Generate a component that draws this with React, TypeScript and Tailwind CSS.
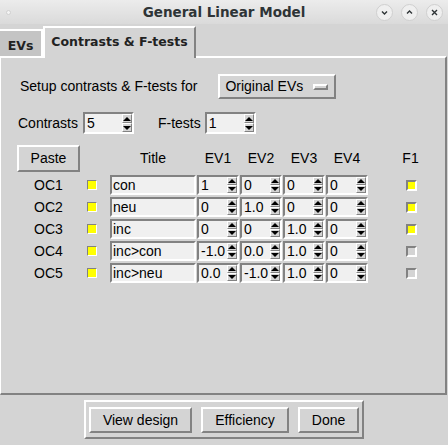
import React from "react";

const raised = "border-2 border-t-white border-l-white border-b-[#828282] border-r-[#828282]";
const sunken = "border-2 border-t-[#828282] border-l-[#828282] border-b-white border-r-white";

function Arrow({ up }: { up?: boolean }) {
  return (
    <div className="flex-1 flex items-center justify-center bg-[#d4d4d4] border border-t-white border-l-white border-b-[#828282] border-r-[#828282]">
      {up ? (
        <div className="w-0 h-0 border-l-[4px] border-r-[4px] border-b-[4px] border-l-transparent border-r-transparent border-b-black" />
      ) : (
        <div className="w-0 h-0 border-l-[4px] border-r-[4px] border-t-[4px] border-l-transparent border-r-transparent border-t-black" />
      )}
    </div>
  );
}

function Spin({ value, cls }: { value: string; cls: string }) {
  return (
    <div className={`flex ${cls} ${sunken} bg-[#f0f0f0]`}>
      <div className="flex-1 flex items-center pl-[2px] text-[14px] leading-none overflow-hidden whitespace-nowrap">{value}</div>
      <div className="flex flex-col w-[10px]">
        <Arrow up />
        <Arrow />
      </div>
    </div>
  );
}

function Check({ on }: { on: boolean }) {
  return (
    <div className={`w-[11px] h-[11px] ${sunken} ${on ? "bg-[#ffff00]" : "bg-[#d4d4d4]"}`} />
  );
}

const rows = [
  { oc: "OC1", title: "con", ev: ["1", "0", "0", "0"], f: true },
  { oc: "OC2", title: "neu", ev: ["0", "1.0", "0", "0"], f: true },
  { oc: "OC3", title: "inc", ev: ["0", "0", "1.0", "0"], f: true },
  { oc: "OC4", title: "inc>con", ev: ["-1.0", "0.0", "1.0", "0"], f: false },
  { oc: "OC5", title: "inc>neu", ev: ["0.0", "-1.0", "1.0", "0"], f: false },
];

function TitleCircle({ children }: { children: React.ReactNode }) {
  return (
    <div className="w-[17px] h-[17px] rounded-full border border-[#cfcfcf] bg-[#efefef] flex items-center justify-center">
      {children}
    </div>
  );
}

export default function App() {
  return (
    <div className="w-[448px] h-[445px] bg-[#d4d4d4] overflow-hidden flex flex-col font-['Liberation_Sans',Arial,sans-serif] text-black">
      {/* title bar */}
      <div className="h-[24px] flex items-center bg-linear-to-b from-[#ececec] to-[#dadada]">
        <div className="w-[80px] flex items-center pl-[6px]">
          <div className="w-[5px] h-[5px] rounded-full bg-[#f4f4f4] border border-[#d0d0d0]" />
        </div>
        <div className="flex-1 text-center font-['DejaVu_Sans',sans-serif] font-bold text-[13.5px] text-[#2e3436]">
          General Linear Model
        </div>
        <div className="w-[80px] flex items-center justify-end gap-[8px] pr-[5px]">
          <TitleCircle>
            <svg width="9" height="9" viewBox="0 0 9 9"><path d="M2 3.5 L4.5 6 L7 3.5" stroke="#2e3436" strokeWidth="1.4" fill="none" /></svg>
          </TitleCircle>
          <TitleCircle>
            <svg width="9" height="9" viewBox="0 0 9 9"><path d="M2 5.5 L4.5 3 L7 5.5" stroke="#2e3436" strokeWidth="1.4" fill="none" /></svg>
          </TitleCircle>
          <TitleCircle>
            <svg width="9" height="9" viewBox="0 0 9 9"><path d="M2 2 L7 7 M7 2 L2 7" stroke="#2e3436" strokeWidth="1.4" fill="none" /></svg>
          </TitleCircle>
        </div>
      </div>

      {/* tabs */}
      <div className="h-[32px] flex items-end font-['DejaVu_Sans',sans-serif] font-bold text-[12.5px] text-[#222]">
        <div className="w-[43px] h-[27px] bg-[#c4c4c4] border-t-2 border-r-2 border-t-white border-r-white flex items-center justify-center pt-[5px]">
          EVs
        </div>
        <div className="relative z-10 -mb-[2px] w-[153px] h-[32px] bg-[#d4d4d4] border-t-2 border-l-2 border-r-2 border-t-white border-l-white border-r-[#828282] flex items-start justify-center pt-[5px]">
          Contrasts &amp; F-tests
        </div>
      </div>

      {/* panel */}
      <div className="h-[339px] mr-[1px] border-t-2 border-l border-r-2 border-b-2 border-t-white border-l-white border-r-[#828282] border-b-[#828282] flex flex-col text-[14px]">
        <div className="mt-[16px] flex items-center pl-[19px] h-[25px]">
          <span>Setup contrasts &amp; F-tests for</span>
          <div className={`ml-[21px] w-[118px] h-[25px] ${raised} flex items-center pl-[5px]`}>
            <span className="flex-1">Original EVs</span>
            <div className="w-[15px] h-[6px] mr-[6px] border-2 border-t-white border-l-white border-b-[#828282] border-r-[#828282]" />
          </div>
        </div>

        <div className="mt-[13px] flex items-center pl-[17px] h-[22px]">
          <span>Contrasts</span>
          <Spin value="5" cls="ml-[5px] w-[51px] h-[22px]" />
          <span className="ml-[24px]">F-tests</span>
          <Spin value="1" cls="ml-[4px] w-[51px] h-[22px]" />
        </div>

        <div className="mt-[11px] flex items-center pl-[16px] h-[27px]">
          <div className={`w-[63px] h-[27px] ${raised} flex items-center justify-center`}>Paste</div>
          <div className="ml-[30px] w-[86px] text-center">Title</div>
          <div className="ml-[1px] w-[42px] text-center">EV1</div>
          <div className="ml-[1px] w-[42px] text-center">EV2</div>
          <div className="ml-[1px] w-[42px] text-center">EV3</div>
          <div className="ml-[1px] w-[42px] text-center">EV4</div>
          <div className="ml-[37px] w-[11px] flex justify-center">F1</div>
        </div>

        <div className="mt-[3px] flex flex-col gap-[2px]">
          {rows.map((r) => (
            <div key={r.oc} className="flex items-center pl-[16px] h-[20px]">
              <div className="w-[63px] text-center">{r.oc}</div>
              <div className="ml-[7px] w-[10px] h-[10px] bg-[#ffff00] border border-t-[#828282] border-l-[#828282] border-b-white border-r-white" />
              <div className={`ml-[13px] w-[86px] h-[20px] ${sunken} bg-[#f0f0f0] flex items-center pl-[1px] leading-none whitespace-nowrap`}>{r.title}</div>
              <Spin value={r.ev[0]} cls="ml-[1px] w-[42px] h-[20px]" />
              <Spin value={r.ev[1]} cls="ml-[1px] w-[42px] h-[20px]" />
              <Spin value={r.ev[2]} cls="ml-[1px] w-[42px] h-[20px]" />
              <Spin value={r.ev[3]} cls="ml-[1px] w-[42px] h-[20px]" />
              <div className="ml-[38px]">
                <Check on={r.f} />
              </div>
            </div>
          ))}
        </div>
      </div>

      {/* bottom buttons */}
      <div className="flex justify-center mt-[5px] text-[14px]">
        <div className={`w-[280px] h-[39px] ${raised} flex items-start gap-[9px] pl-[3px] pt-[5px]`}>
          <div className={`w-[103px] h-[26px] ${raised} flex items-center justify-center`}>View design</div>
          <div className={`w-[88px] h-[26px] ${raised} flex items-center justify-center`}>Efficiency</div>
          <div className={`w-[61px] h-[26px] ${raised} flex items-center justify-center`}>Done</div>
        </div>
      </div>
    </div>
  );
}
